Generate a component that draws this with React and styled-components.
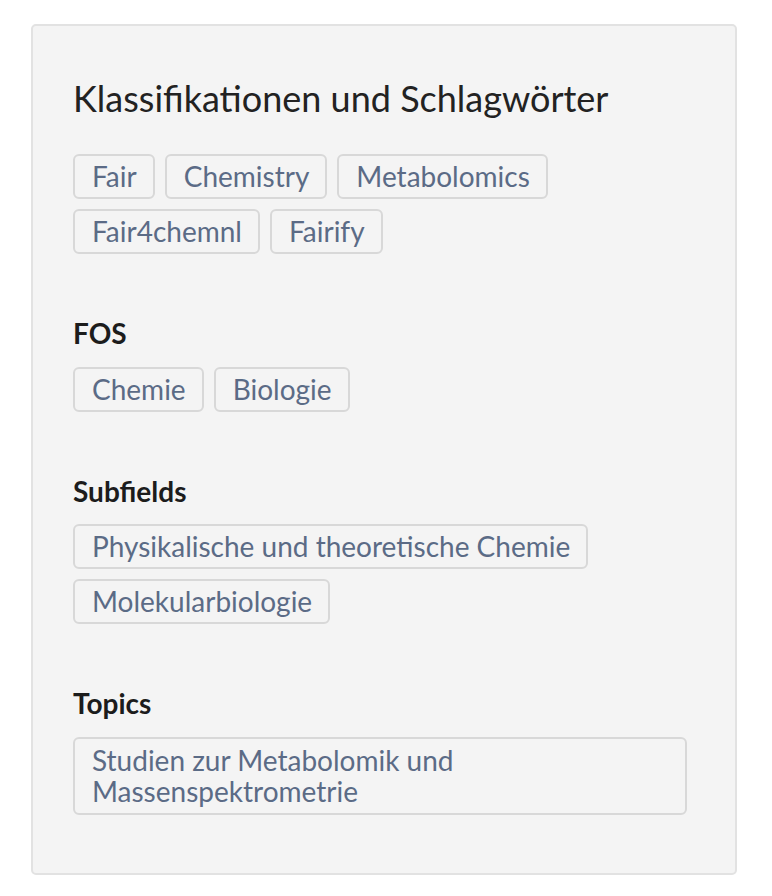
import React from 'react';
import styled, { createGlobalStyle } from 'styled-components';

const GlobalStyle = createGlobalStyle`
  body {
    margin: 0;
    background: #ffffff;
    font-family: Lato, "Open Sans", sans-serif;
  }
`;

const Panel = styled.section`
  margin: 24px 35px 22px 31px;
  padding: 51px 48px 58px 40px;
  background: #f4f4f4;
  border: 2px solid #e2e2e2;
  border-radius: 5px;
`;

const Title = styled.h2`
  margin: 0 0 34px;
  font-size: 36px;
  line-height: 1.2;
  font-weight: 400;
  color: #222222;
`;

const Section = styled.div`
  margin-top: 63px;
`;

const SectionTitle = styled.h3`
  margin: 0 0 16px;
  font-size: 28px;
  line-height: 1.2;
  font-weight: 700;
  color: #1c1c1c;
`;

const TagList = styled.ul`
  display: flex;
  flex-wrap: wrap;
  gap: 10px 10px;
  margin: 0;
  padding: 0;
  list-style: none;
`;

const Tag = styled.li`
  display: inline-block;
  max-width: 100%;
  box-sizing: border-box;
  padding: 6px 16px 6px 17px;
  font-size: 28px;
  line-height: ${({ wide }) => (wide ? '31px' : '29px')};
  color: #5b6b86;
  background: #f4f4f4;
  border: 2px solid #d8d8d8;
  border-radius: 6px;
`;

const sections = [
  { title: 'FOS', tags: ['Chemie', 'Biologie'] },
  { title: 'Subfields', tags: ['Physikalische und theoretische Chemie', 'Molekularbiologie'] },
  { title: 'Topics', tags: ['Studien zur Metabolomik und Massenspektrometrie'], wide: true },
];

const keywords = ['Fair', 'Chemistry', 'Metabolomics', 'Fair4chemnl', 'Fairify'];

const App = () => (
  <>
    <GlobalStyle />
    <Panel>
      <Title>Klassifikationen und Schlagwörter</Title>
      <TagList>
        {keywords.map((k) => (
          <Tag key={k}>{k}</Tag>
        ))}
      </TagList>
      {sections.map((s) => (
        <Section key={s.title}>
          <SectionTitle>{s.title}</SectionTitle>
          <TagList>
            {s.tags.map((t) => (
              <Tag key={t} wide={s.wide}>{t}</Tag>
            ))}
          </TagList>
        </Section>
      ))}
    </Panel>
  </>
);

export default App;
